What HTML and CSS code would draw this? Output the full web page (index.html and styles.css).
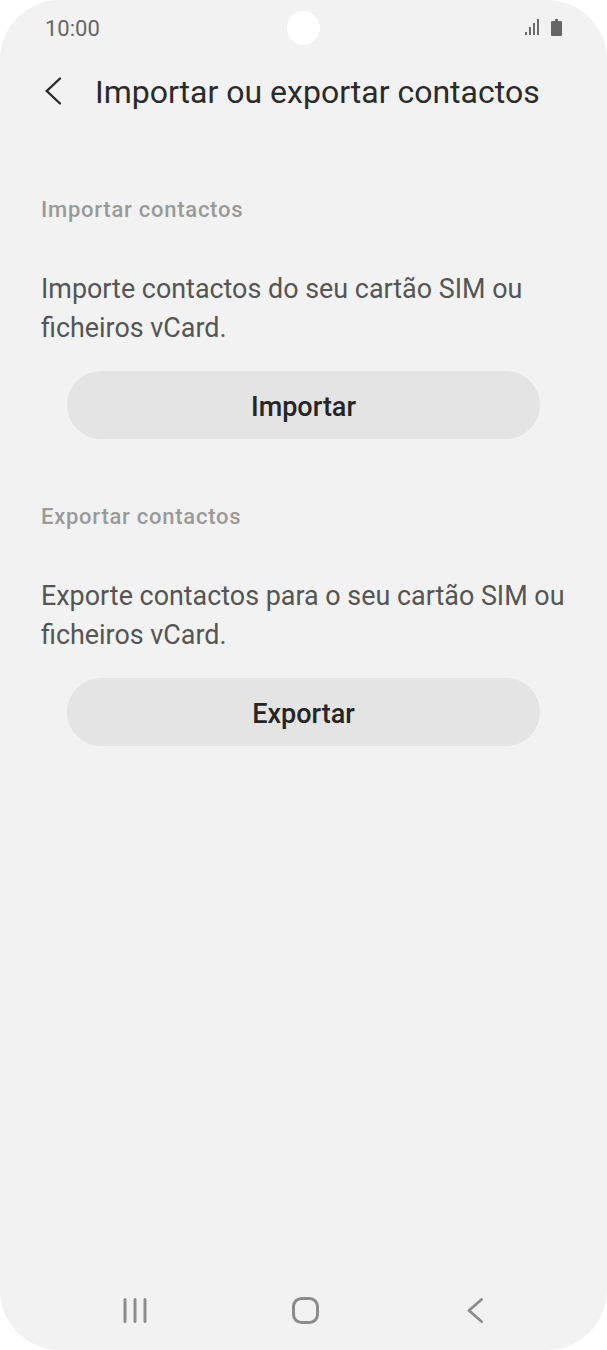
FILE: index.html
```html
<!DOCTYPE html>
<html lang="pt">
<head>
  <meta charset="UTF-8">
  <title>Importar ou exportar contactos</title>
  <link rel="stylesheet" href="styles.css">
</head>
<body>
  <div class="phone">
    <div class="statusbar">
      <span class="clock">10:00</span>
      <span class="camera"></span>
      <span class="status-icons">
        <svg width="14" height="16" viewBox="0 0 14 16"><g fill="#6b6b6b"><rect x="0" y="13" width="2" height="3"/><rect x="4" y="8" width="2" height="8"/><rect x="8" y="4" width="2" height="12"/><rect x="12" y="0" width="2" height="16"/></g></svg>
        <svg width="11" height="17" viewBox="0 0 11 17"><path fill="#666" d="M4 0h3v2h3a1 1 0 0 1 1 1v13a1 1 0 0 1-1 1H1a1 1 0 0 1-1-1V3a1 1 0 0 1 1-1h3z"/></svg>
      </span>
    </div>

    <div class="topbar">
      <svg class="back" width="16" height="28" viewBox="0 0 16 28"><path d="M15 1.500 1.800 14 15 26.500" fill="none" stroke="#2b2b2b" stroke-width="2.400" stroke-linecap="round"/></svg>
      <h1>Importar ou exportar contactos</h1>
    </div>

    <section class="group first">
      <h2>Importar contactos</h2>
      <p>Importe contactos do seu cartão SIM ou ficheiros vCard.</p>
      <button>Importar</button>
    </section>

    <section class="group">
      <h2>Exportar contactos</h2>
      <p>Exporte contactos para o seu cartão SIM ou ficheiros vCard.</p>
      <button>Exportar</button>
    </section>

    <nav class="navbar">
      <svg width="24" height="26" viewBox="0 0 24 26"><g stroke="#8c8c8c" stroke-width="3" stroke-linecap="round"><path d="M2 2.500v22M12 2.500v22M22 2.500v22"/></g></svg>
      <svg width="27" height="27" viewBox="0 0 27 27"><rect x="1.500" y="1.500" width="24" height="24" rx="8" fill="none" stroke="#8c8c8c" stroke-width="3"/></svg>
      <svg width="16" height="26" viewBox="0 0 16 26"><path d="M14.500 2.500 2 13.500l12.500 11" fill="none" stroke="#8c8c8c" stroke-width="2.800" stroke-linecap="round" stroke-linejoin="round"/></svg>
    </nav>
  </div>
</body>
</html>
```

FILE: styles.css
```css
html, body { margin: 0; padding: 0; background: #fff; }
body { font-family: Roboto, "Liberation Sans", sans-serif; }

.phone {
  width: 607px;
  height: 1350px;
  background: #f2f2f2;
  border-radius: 60px;
  display: flex;
  flex-direction: column;
  overflow: hidden;
}

.statusbar {
  height: 56px;
  padding: 0 45px;
  display: flex;
  align-items: center;
  justify-content: space-between;
  position: relative;
  flex: none;
}
.clock { font-size: 22px; color: #666; }
.camera {
  position: absolute;
  left: 287px;
  top: 11px;
  width: 33px;
  height: 34px;
  border-radius: 50%;
  background: #fff;
}
.status-icons { display: flex; align-items: center; gap: 12px; margin-bottom: 2px; }

.topbar {
  display: flex;
  align-items: center;
  height: 72px;
  padding-left: 45px;
  flex: none;
}
.back { margin: 0 34px 2px 0; }
.topbar h1 { margin: 0; font-size: 32px; font-weight: 400; color: #2a2a2a; }

.group { padding: 0 30px 0 41px; }
.group.first { margin-top: 67px; }
.group + .group { margin-top: 63px; }
.group h2 { margin: 0; font-size: 22px; line-height: 30px; font-weight: 500; letter-spacing: 0.75px; color: #9a9a9a; }
.group p { margin: 45px 0 0; font-size: 26.900px; line-height: 39px; color: #555; }
.group button {
  display: block;
  width: 473px;
  height: 68px;
  margin: 23px 0 0 26px;
  padding: 4px 0 0;
  border: none;
  border-radius: 34px;
  background: #e4e4e4;
  font-family: inherit;
  font-size: 27px;
  font-weight: 500;
  color: #252525;
}

.navbar {
  margin-top: auto;
  height: 53px;
  padding-left: 50px;
  display: grid;
  grid-template-columns: repeat(3, 170px);
  justify-items: center;
  align-items: start;
}
```
